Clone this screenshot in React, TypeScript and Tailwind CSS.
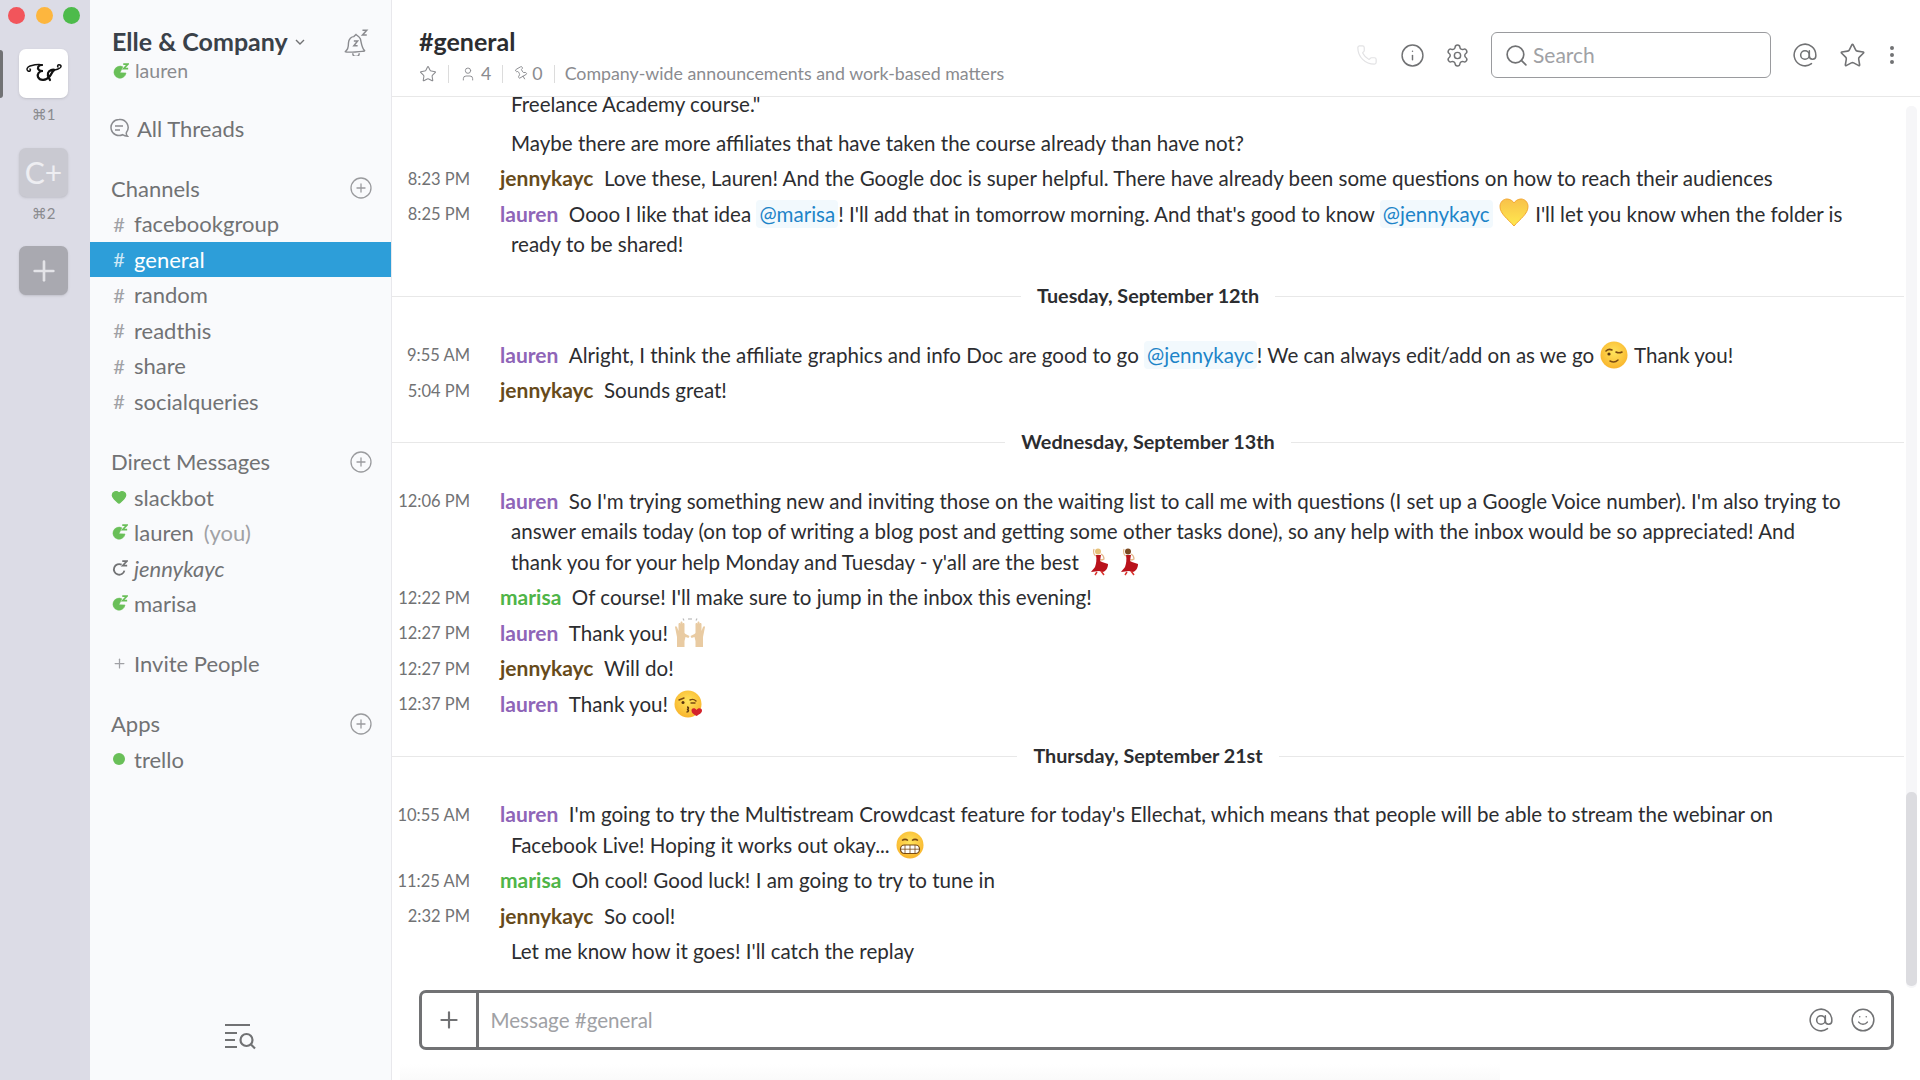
import type { ReactNode } from 'react'
import { AtSign, CirclePlus, Heart, Info, MoreVertical, Phone, Pin, Plus, Search, Settings, Smile, Star, User } from 'lucide-react'

const channels = ['facebookgroup', 'general', 'random', 'readthis', 'share', 'socialqueries']

function Presence({ filled = true }: { filled?: boolean }) {
  const color = filled ? '#69bf58' : '#717274'
  return (
    <svg width="17" height="17" viewBox="0 0 16 16" className="shrink-0">
      {filled ? (
        <path d="M10.2 3.6A5.7 5.7 0 1 0 13.2 9.4L7.5 9.2Z" fill={color} stroke={color} strokeWidth="0.5" />
      ) : (
        <path d="M10 4.400A5 5 0 1 0 12.600 10" fill="none" stroke={color} strokeWidth="1.700" />
      )}
      <path d="M10.600 1h4.400l-4 4.200h4.200" fill="none" stroke={color} strokeWidth="1.600" />
    </svg>
  )
}

function SideRow({ icon, children, active }: { icon: ReactNode; children: ReactNode; active?: boolean }) {
  return (
    <div className={`flex h-[35.5px] items-center pl-[18px] ${active ? 'bg-[#2d9ed9] text-white' : 'text-[#717274]'}`}>
      <span className="mr-[4px] flex w-[22px] justify-center">{icon}</span>
      {children}
    </div>
  )
}

function SideHeading({ label, className }: { label: string; className: string }) {
  return (
    <div className={`flex h-[36px] items-center justify-between pl-[21px] pr-[18px] text-[#717274] ${className}`}>
      <span>{label}</span>
      <CirclePlus size={24} strokeWidth={1.3} className="text-[#9a9b9e]" />
    </div>
  )
}

function Hash({ light }: { light?: boolean }) {
  return <span className={`text-[20px] ${light ? 'text-[#cfe8f6]' : 'text-[#a0a1a5]'}`}>#</span>
}

function Sidebar() {
  return (
    <aside className="flex h-full w-[302px] shrink-0 flex-col border-r border-[#e8e8ec] bg-[#f9fafc] text-[22px]">
      <div className="flex items-start justify-between pl-[22px] pr-[21px] pt-[24px]">
        <div>
          <div className="flex h-[34px] items-center text-[25px] font-bold leading-none text-[#3a4149]">
            Elle &amp; Company
            <svg width="12" height="8" viewBox="0 0 12 8" className="ml-[6px] mt-[2px]">
              <path d="M2 2l4 4 4-4" fill="none" stroke="#717274" strokeWidth="1.4" />
            </svg>
          </div>
          <div className="flex h-[26px] items-center text-[19.5px] text-[#8a8b8f]">
            <Presence />
            <span className="ml-[6px]">lauren</span>
          </div>
        </div>
        <svg width="28" height="28" viewBox="0 0 26 26" fill="none" stroke="#8a8b8f" strokeWidth="1.3" className="mt-[4px]">
          <path d="M3 22c2-2 3-3 3-8 0-4 3-6 5-6l2-2c1 1 3 2 4 4 1 3 1 8 4 11 1 1-18 2-18 1Z" />
          <path d="M10 23.5a3 3 0 0 0 6 0" />
          <path d="M11 12h3.500l-3.500 4.500h3.500M19 2h4l-4 4.500h4" strokeWidth="1.4" />
        </svg>
      </div>
      <div className="mt-[26px] flex h-[36px] items-center pl-[19px] text-[#717274]">
        <svg width="20" height="20" viewBox="0 0 20 20" fill="none" stroke="#8a8b8f" strokeWidth="1.5">
          <path d="M10 1.500a8 8 0 1 0 3.500 15.200c1.500 1 3 1.500 5 1.500-1-1-1.500-2.500-1-4A8 8 0 0 0 10 1.500Z" />
          <path d="M6 8h8M6 12h5" />
        </svg>
        <span className="ml-[8px]">All Threads</span>
      </div>
      <SideHeading label="Channels" className="mt-[24px]" />
      {channels.map((c) => (
        <SideRow key={c} icon={<Hash light={c === 'general'} />} active={c === 'general'}>
          {c}
        </SideRow>
      ))}
      <SideHeading label="Direct Messages" className="mt-[24.5px]" />
      <SideRow icon={<Heart size={16} fill="#69bf58" stroke="#69bf58" />}>slackbot</SideRow>
      <SideRow icon={<Presence />}>
        lauren<span className="ml-[10px] text-[#a0a1a5]">(you)</span>
      </SideRow>
      <SideRow icon={<Presence filled={false} />}>
        <span className="italic">jennykayc</span>
      </SideRow>
      <SideRow icon={<Presence />}>marisa</SideRow>
      <div className="mt-[24.5px]">
        <SideRow icon={<Plus size={15} className="text-[#a0a1a5]" />}>Invite People</SideRow>
      </div>
      <SideHeading label="Apps" className="mt-[24px]" />
      <SideRow icon={<span className="size-[12px] rounded-full bg-[#69bf58]" />}>trello</SideRow>
      <div className="mt-auto flex justify-center pb-[30px]">
        <svg width="34" height="28" viewBox="0 0 34 28" fill="none" stroke="#717274" strokeWidth="2.2">
          <path d="M1 3h25M1 11h12M1 18h10M1 25h12" />
          <circle cx="22.500" cy="18" r="6" />
          <path d="M27 22.500l4 4" />
        </svg>
      </div>
    </aside>
  )
}

function Rail() {
  return (
    <nav className="relative flex h-full w-[90px] shrink-0 flex-col items-center bg-[#dcdce6] pr-[3px]">
      <div className="absolute left-0 top-[50px] h-[48px] w-[3px] rounded-r bg-[#717274]" />
      <div className="flex w-full gap-[10.5px] pl-[8px] pt-[7px]">
        <span className="size-[17px] rounded-full bg-[#f2555b]" />
        <span className="size-[17px] rounded-full bg-[#fdb63e]" />
        <span className="size-[17px] rounded-full bg-[#4dbb4b]" />
      </div>
      <div className="mt-[25px] flex size-[49px] items-center justify-center rounded-[7px] bg-white shadow-sm">
        <svg width="40" height="24" viewBox="0 0 40 24" fill="none" stroke="#111" strokeLinecap="round">
          <path d="M18 3c-3-1-8 0-12 1C3 5 2 8 4 9s3-1 2-2" strokeWidth="1.500" />
          <path d="M18 3c-4 0-5 3-3 5 1 1 3 1 4 1-4 0-6 3-5 6 2 4 8 4 12-1 2-3 3-6 5-6-2-1-6 0-7 3-1 3 1 5 2 7" strokeWidth="2.200" />
          <path d="M27 9c2-1 5-1 7-2 3-1 4-3 2-4s-3 1-2 2" strokeWidth="1.500" />
        </svg>
      </div>
      <div className="mt-[5px] h-[22px] text-[15px] leading-[22px] text-[#8a8b8f]">⌘1</div>
      <div className="mt-[23px] flex size-[49px] items-center justify-center rounded-[7px] bg-[#c9c9d1] text-[30px] text-[#eeeef2] shadow-sm">C+</div>
      <div className="mt-[5px] h-[22px] text-[15px] leading-[22px] text-[#8a8b8f]">⌘2</div>
      <div className="mt-[22px] flex size-[49px] items-center justify-center rounded-[7px] bg-[#a9a9b0] shadow-sm">
        <Plus size={32} strokeWidth={2} className="text-[#e4e4e8]" />
      </div>
    </nav>
  )
}

function EmojiFace({ children, id }: { children: ReactNode; id: string }) {
  return (
    <svg width="30" height="30" viewBox="0 0 30 30" className="-my-[4px] inline-block align-[-3px]">
      <defs>
        <radialGradient id={id} cx="0.5" cy="0.4" r="0.6">
          <stop offset="0" stopColor="#ffe45c" />
          <stop offset="1" stopColor="#f9b52d" />
        </radialGradient>
      </defs>
      <circle cx="15" cy="15" r="13.500" fill={`url(#${id})`} />
      {children}
    </svg>
  )
}

function YellowHeart() {
  return (
    <svg width="30" height="30" viewBox="0 0 30 30" className="-my-[4px] mx-[1px] inline-block align-[-2px]">
      <defs>
        <linearGradient id="yh" x1="0" y1="0" x2="0" y2="1">
          <stop offset="0" stopColor="#f8c14a" />
          <stop offset="1" stopColor="#ffe94f" />
        </linearGradient>
      </defs>
      <path d="M15 28C9 21 1 16 1 8.500 1 4 4.500 1 8 1c3 0 6 2 7 4 1-2 4-4 7-4 3.500 0 7 3 7 7.500C29 16 21 21 15 28Z" fill="url(#yh)" stroke="#f3a832" strokeWidth="1" />
    </svg>
  )
}

function Wink() {
  return (
    <EmojiFace id="wink">
      <path d="M7 11c2-2 4-2 6-1M17 12c2 1 4 1 6 0" fill="none" stroke="#7a4a12" strokeWidth="1.600" strokeLinecap="round" />
      <circle cx="10" cy="14" r="1.600" fill="#5a3510" />
      <path d="M11 21c3 1.500 6 1 8-1" fill="none" stroke="#7a4a12" strokeWidth="1.500" strokeLinecap="round" />
    </EmojiFace>
  )
}

function Kiss() {
  return (
    <EmojiFace id="kiss">
      <path d="M6 11l5-2M17 11c2-1 4-1 6 1M18 14h4" fill="none" stroke="#7a4a12" strokeWidth="1.400" strokeLinecap="round" />
      <circle cx="10" cy="13.500" r="1.500" fill="#5a3510" />
      <path d="M14 18c2 0 2 2 0 2.500 2 0 2 2.500-.5 2.500" fill="none" stroke="#5a3510" strokeWidth="1.500" />
      <path d="M23.500 27c-3-2-5-3-5-5.500 0-2.500 3.500-3 5-.5 1.500-2.500 5.500-2 5.500.5 0 2.500-3 4-5.500 5.500Z" fill="#d3232c" />
    </EmojiFace>
  )
}

function Grimace() {
  return (
    <EmojiFace id="grim">
      <path d="M7 10.500c2-1.500 4-1.500 6 0M17 10.500c2-1.500 4-1.500 6 0" fill="none" stroke="#7a4a12" strokeWidth="1.500" />
      <rect x="5.500" y="15" width="19" height="8.500" rx="4" fill="#fff" stroke="#7a4a12" strokeWidth="1.200" />
      <path d="M5.500 19.200h19M10 15v8.500M15 15v8.500M20 15v8.500" stroke="#7a4a12" strokeWidth="0.800" />
    </EmojiFace>
  )
}

function Dancer({ hair }: { hair: string }) {
  return (
    <svg width="30" height="30" viewBox="-5 0 30 30" className="-my-[4px] inline-block align-[-3px]">
      <circle cx="9" cy="4.500" r="3" fill={hair} />
      <path d="M7 9c-2-1-3-4-2-7M12 7c2 1 3 3 3 5-1 1-3 1-4 1" fill="none" stroke="#e6b98c" strokeWidth="1.300" />
      <path d="M7 8h5l-1 6 2 1 6 2c0 4-2 7-5 8l-4-1-8 1c1-2 3-3 4-5 1-3 2-7 1-12Z" fill="#b9121b" />
      <path d="M12 24l3 4M8 25l-2 3" stroke="#d8322b" strokeWidth="1.500" />
    </svg>
  )
}

function RaisedHands() {
  return (
    <svg width="34" height="30" viewBox="0 0 34 30" className="-my-[4px] inline-block align-[-3px]">
      <path d="M4 29V19L2 9c0-1 1.500-1 2 0L5.500 13V6c0-1.500 2-1.500 2 0v6V4.500c0-1.500 2-1.500 2 0V12V6c0-1.500 2-1.500 2 0v9l1 1 4 2-1 2-3-1-1 4v6Z" fill="#e9cba2" />
      <path d="M30 29V19l2-10c0-1-1.500-1-2 0L28.500 13V6c0-1.500-2-1.500-2 0v6V4.500c0-1.500-2-1.500-2 0V12V6c0-1.500-2-1.500-2 0v9l-1 1-4 2 1 2 3-1 1 4v6Z" fill="#e9cba2" />
      <path d="M10 0.500l1 2M16 0v2M18 0v2M24 0.500l-1 2" stroke="#b9b9b9" strokeWidth="1.200" />
    </svg>
  )
}

function Mention({ children }: { children: ReactNode }) {
  return <span className="rounded-[4px] bg-[#f2f9fd] px-[3px] py-[2px] text-[#1d84c8]">{children}</span>
}

const nameColors: Record<string, string> = {
  lauren: 'text-[#8f65b8]',
  jennykayc: 'text-[#674b1b]',
  marisa: 'text-[#4fb548]',
}

function Message({ time, name, children }: { time?: string; name?: string; children: ReactNode }) {
  return (
    <div className="flex py-[2.5px] pr-[60px]">
      <div className="w-[80px] shrink-0 whitespace-nowrap pr-[2px] pt-[1.5px] text-right text-[16.5px] leading-[29px] text-[#717274]">{time}</div>
      <div className={`ml-[-1px] pl-[40px] ${name ? '-indent-[11px]' : ''}`}>
        {name && <span className={`mr-[10.500px] text-[21px] font-bold leading-none ${nameColors[name]}`}>{name}</span>}
        {children}
      </div>
    </div>
  )
}

function DayDivider({ label }: { label: string }) {
  return (
    <div className="flex h-[75px] items-center gap-[16px] pb-[6px] pr-[16px]">
      <div className="h-px flex-1 bg-[#e8e8e8]" />
      <span className="text-[19.75px] font-bold text-[#2c2d30]">{label}</span>
      <div className="h-px flex-1 bg-[#e8e8e8]" />
    </div>
  )
}

function Sep() {
  return <span className="mx-[11px] h-[18px] w-px bg-[#dcdcdc]" />
}

function Header() {
  return (
    <header className="flex h-[97px] shrink-0 items-center justify-between border-b border-[#e8e8e8] pl-[27px] pr-[16px]">
      <div className="pt-[12px]">
        <div className="text-[25px] font-bold leading-[36px] text-[#2c2d30]">#general</div>
        <div className="mt-[3px] flex h-[24px] items-center text-[17.8px] text-[#8a8b8f]">
          <Star size={18} strokeWidth={1.4} />
          <Sep />
          <User size={16} strokeWidth={1.4} />
          <span className="ml-[5px]">4</span>
          <Sep />
          <Pin size={15} strokeWidth={1.4} className="rotate-[-30deg]" />
          <span className="ml-[3px]">0</span>
          <Sep />
          <span className="-ml-[1px]">Company-wide announcements and work-based matters</span>
        </div>
      </div>
      <div className="flex items-center pt-[14px] text-[#717274]">
        <Phone size={22} strokeWidth={1.3} className="text-[#e2e2e4]" />
        <Info size={25} strokeWidth={1.4} className="ml-[22px]" />
        <Settings size={25} strokeWidth={1.4} className="ml-[20px]" />
        <div className="ml-[21px] flex h-[46px] w-[280px] items-center rounded-[6px] border border-[#9a9b9e] pl-[12px] text-[21px] text-[#a0a1a5]">
          <Search size={25} strokeWidth={1.6} className="text-[#717274]" />
          <span className="ml-[4px]">Search</span>
        </div>
        <AtSign size={26} strokeWidth={1.4} className="ml-[21px]" />
        <Star size={27} strokeWidth={1.4} className="ml-[21px]" />
        <MoreVertical size={24} strokeWidth={2} className="ml-[14px]" />
      </div>
    </header>
  )
}

function Messages() {
  return (
    <div className="relative min-h-0 flex-1 overflow-hidden text-[20.55px] leading-[30.5px] text-[#2c2d30]">
      <div className="-mt-[11px]">
        <Message>Freelance Academy course."</Message>
        <div className="h-[3.5px]" />
        <Message>Maybe there are more affiliates that have taken the course already than have not?</Message>
        <Message time="8:23 PM" name="jennykayc">
          Love these, Lauren! And the Google doc is super helpful. There have already been some questions on how to reach their audiences
        </Message>
        <Message time="8:25 PM" name="lauren">
          Oooo I like that idea <Mention>@marisa</Mention>! I'll add that in tomorrow morning. And that's good to know <Mention>@jennykayc</Mention> <YellowHeart /> I'll let you know when the folder is
          <br />
          ready to be shared!
        </Message>
        <DayDivider label="Tuesday, September 12th" />
        <Message time="9:55 AM" name="lauren">
          Alright, I think the affiliate graphics and info Doc are good to go <Mention>@jennykayc</Mention>! We can always edit/add on as we go <Wink /> Thank you!
        </Message>
        <Message time="5:04 PM" name="jennykayc">
          Sounds great!
        </Message>
        <DayDivider label="Wednesday, September 13th" />
        <Message time="12:06 PM" name="lauren">
          So I'm trying something new and inviting those on the waiting list to call me with questions (I set up a Google Voice number). I'm also trying to
          <br />
          answer emails today (on top of writing a blog post and getting some other tasks done), so any help with the inbox would be so appreciated! And
          <br />
          thank you for your help Monday and Tuesday - y'all are the best <Dancer hair="#e6c27a" /><Dancer hair="#7a4a22" />
        </Message>
        <Message time="12:22 PM" name="marisa">
          Of course! I'll make sure to jump in the inbox this evening!
        </Message>
        <Message time="12:27 PM" name="lauren">
          Thank you! <RaisedHands />
        </Message>
        <Message time="12:27 PM" name="jennykayc">
          Will do!
        </Message>
        <Message time="12:37 PM" name="lauren">
          Thank you! <Kiss />
        </Message>
        <DayDivider label="Thursday, September 21st" />
        <Message time="10:55 AM" name="lauren">
          I'm going to try the Multistream Crowdcast feature for today's Ellechat, which means that people will be able to stream the webinar on
          <br />
          Facebook Live! Hoping it works out okay... <Grimace />
        </Message>
        <Message time="11:25 AM" name="marisa">
          Oh cool! Good luck! I am going to try to tune in
        </Message>
        <Message time="2:32 PM" name="jennykayc">
          So cool!
        </Message>
        <Message>Let me know how it goes! I'll catch the replay</Message>
      </div>
      <div className="absolute bottom-0 right-[3px] top-[9px] w-[11px] rounded-[5px] bg-[#f6f6f8]">
        <div className="absolute bottom-[2px] left-0 right-0 h-[194px] rounded-[5px] bg-[#dcdce0]" />
      </div>
    </div>
  )
}

function Composer() {
  return (
    <div className="relative h-[92px] shrink-0 pl-[26.5px] pr-[26px] pt-[2px]">
      <div className="flex h-[60px] items-stretch rounded-[7px] border-[3px] border-[#717274]">
        <div className="flex w-[57px] items-center justify-center border-r-[3px] border-[#717274] text-[#717274]">
          <Plus size={26} strokeWidth={2} />
        </div>
        <div className="flex flex-1 items-center justify-between pl-[12px] pr-[15px] text-[20.55px] text-[#a0a1a5]">
          <span>Message #general</span>
          <div className="flex items-center gap-[16px] text-[#717274]">
            <AtSign size={26} strokeWidth={1.4} />
            <Smile size={26} strokeWidth={1.4} />
          </div>
        </div>
      </div>
      <div className="absolute bottom-0 left-[8px] h-[16px] w-[1100px] bg-linear-to-b from-white to-[#fafafa]" />
    </div>
  )
}

export default function App() {
  return (
    <div className="flex h-[1080px] w-[1920px] overflow-hidden bg-white font-[Lato,'DejaVu_Sans',sans-serif]">
      <Rail />
      <Sidebar />
      <main className="flex min-w-0 flex-1 flex-col">
        <Header />
        <Messages />
        <Composer />
      </main>
    </div>
  )
}
